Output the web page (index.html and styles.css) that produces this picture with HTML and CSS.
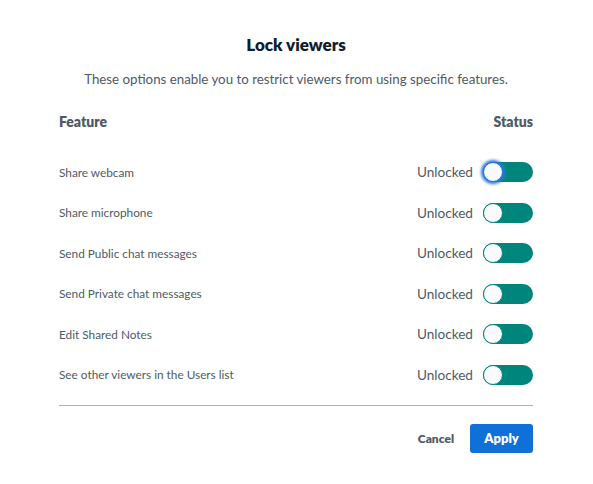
FILE: index.html
```html
<!DOCTYPE html>
<html>
<head>
<meta charset="utf-8">
<link rel="stylesheet" href="styles.css">
</head>
<body>
<div class="modal">
  <h1 class="title">Lock viewers</h1>
  <p class="desc">These options enable you to restrict viewers from using specific features.</p>
  <div class="head-row">
    <span>Feature</span>
    <span>Status</span>
  </div>
  <div class="rows">
    <div class="row"><span class="feat">Share webcam</span><span class="status"><span class="label">Unlocked</span><span class="toggle focused"><span class="knob"></span></span></span></div>
    <div class="row"><span class="feat">Share microphone</span><span class="status"><span class="label">Unlocked</span><span class="toggle"><span class="knob"></span></span></span></div>
    <div class="row"><span class="feat">Send Public chat messages</span><span class="status"><span class="label">Unlocked</span><span class="toggle"><span class="knob"></span></span></span></div>
    <div class="row"><span class="feat">Send Private chat messages</span><span class="status"><span class="label">Unlocked</span><span class="toggle"><span class="knob"></span></span></span></div>
    <div class="row"><span class="feat">Edit Shared Notes</span><span class="status"><span class="label">Unlocked</span><span class="toggle"><span class="knob"></span></span></span></div>
    <div class="row"><span class="feat">See other viewers in the Users list</span><span class="status"><span class="label">Unlocked</span><span class="toggle"><span class="knob"></span></span></span></div>
  </div>
  <div class="footer">
    <button class="btn-cancel">Cancel</button>
    <button class="btn-apply">Apply</button>
  </div>
</div>
</body>
</html>
```
FILE: styles.css
```css
html, body {
  margin: 0;
  padding: 0;
  background: #ffffff;
}
body {
  font-family: "Lato", "Open Sans", sans-serif;
  color: #4e5a66;
}
.modal {
  width: 474px;
  margin-left: 59px;
  padding-top: 35px;
}
.title {
  margin: 0;
  text-align: center;
  font-size: 17px;
  font-weight: 800;
  color: #0f1d2e;
  line-height: 20px;
}
.desc {
  margin: 15px 0 0;
  text-align: center;
  font-size: 13.3px;
  line-height: 18px;
  color: #4e5a66;
}
.head-row {
  margin-top: 26px;
  display: flex;
  justify-content: space-between;
  font-size: 14px;
  font-weight: 800;
  line-height: 16px;
  color: #4e5a66;
}
.rows {
  margin-top: 32px;
  display: flex;
  flex-direction: column;
  gap: 20.5px;
}
.row {
  display: flex;
  justify-content: space-between;
  align-items: center;
  height: 20px;
}
.feat {
  font-size: 11.8px;
  color: #4e5a66;
}
.status {
  display: flex;
  align-items: center;
  gap: 10px;
}
.label {
  font-size: 13.6px;
  color: #4e5a66;
}
.toggle {
  position: relative;
  width: 50px;
  height: 20px;
  border-radius: 10px;
  background: #00857d;
  box-sizing: border-box;
}
.knob {
  position: absolute;
  left: 0;
  top: 0;
  width: 20px;
  height: 20px;
  border-radius: 50%;
  background: #f9fafb;
  border: 1px solid #00857d;
  box-sizing: border-box;
}
.toggle.focused .knob {
  border-color: #1b6fd8;
  box-shadow: 0 0 3px 2px #2b79e0;
}
.footer {
  margin-top: 20px;
  border-top: 1px solid #a7b3bd;
  padding-top: 18px;
  display: flex;
  justify-content: flex-end;
  align-items: center;
  gap: 16px;
}
.btn-cancel {
  border: none;
  background: none;
  font-family: inherit;
  font-size: 12px;
  font-weight: 800;
  color: #4e5a66;
  padding: 0;
}
.btn-apply {
  border: none;
  background: #0f70d7;
  color: #ffffff;
  font-family: inherit;
  font-size: 13px;
  font-weight: 800;
  width: 63px;
  height: 29px;
  border-radius: 3px;
  padding: 0;
}
```
